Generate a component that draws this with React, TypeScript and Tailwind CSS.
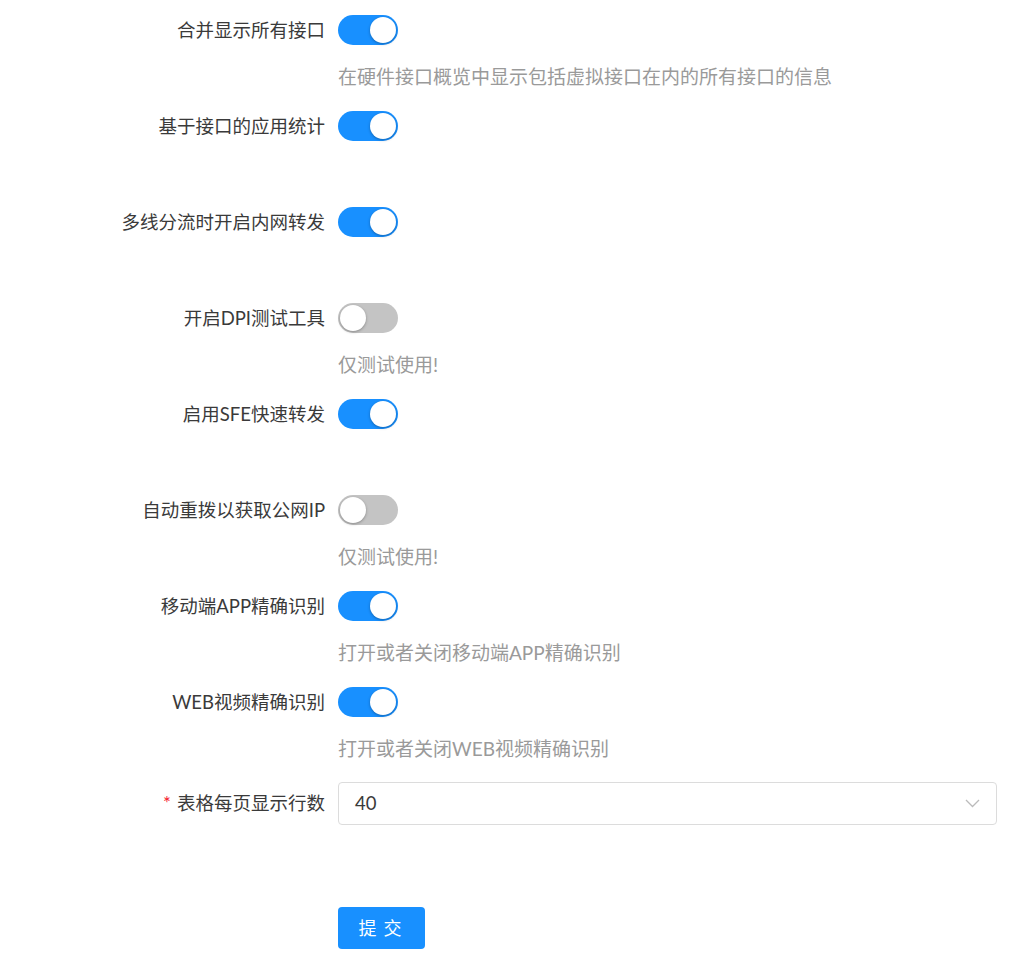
import { useState } from 'react';

type Item = { label: string; on: boolean; help?: string };

const ITEMS: Item[] = [
  { label: '合并显示所有接口', on: true, help: '在硬件接口概览中显示包括虚拟接口在内的所有接口的信息' },
  { label: '基于接口的应用统计', on: true },
  { label: '多线分流时开启内网转发', on: true },
  { label: '开启DPI测试工具', on: false, help: '仅测试使用!' },
  { label: '启用SFE快速转发', on: true },
  { label: '自动重拨以获取公网IP', on: false, help: '仅测试使用!' },
  { label: '移动端APP精确识别', on: true, help: '打开或者关闭移动端APP精确识别' },
  { label: 'WEB视频精确识别', on: true, help: '打开或者关闭WEB视频精确识别' },
];

function Switch({ on, onToggle }: { on: boolean; onToggle: () => void }) {
  return (
    <button
      type="button"
      onClick={onToggle}
      className={`relative h-[30px] w-[60px] rounded-full transition-colors ${
        on ? 'bg-[#1890ff]' : 'bg-[#c4c4c4]'
      }`}
    >
      <span
        className={`absolute top-[2px] h-[26px] w-[26px] rounded-full bg-white shadow-[0_1px_3px_rgba(0,0,0,0.3)] transition-all ${
          on ? 'left-[32px]' : 'left-[2px]'
        }`}
      />
    </button>
  );
}

export default function App() {
  const [values, setValues] = useState(ITEMS.map((i) => i.on));

  return (
    <div
      className="min-h-[980px] w-[1024px] bg-white pt-[14px] text-[18.5px] text-[#3a3a3a]"
      style={{ fontFamily: 'Lato, "Noto Sans CJK SC", sans-serif' }}
    >
      {ITEMS.map((item, idx) => (
        <div key={item.label} className="flex h-[96px]">
          <div className="w-[325px] shrink-0 text-right leading-[32px]">{item.label}</div>
          <div className="ml-[13px] flex flex-col">
            <div className="flex h-[32px] items-center">
              <Switch
                on={values[idx]}
                onToggle={() =>
                  setValues((v) => v.map((x, i) => (i === idx ? !x : x)))
                }
              />
            </div>
            {item.help && (
              <div className="mt-[15px] text-[19px] leading-[32px] text-[#9a9a9a]">{item.help}</div>
            )}
          </div>
        </div>
      ))}

      <div className="flex h-[125px]">
        <div className="w-[325px] shrink-0 text-right leading-[43px]">
          <span className="mr-[6px] text-[#f5222d]">*</span>表格每页显示行数
        </div>
        <div className="ml-[13px] flex h-[43px] w-[659px] items-center justify-between rounded-[4px] border border-[#dcdcdc] pl-[16px] pr-[16px]">
          <span>40</span>
          <svg width="15" height="9" viewBox="0 0 15 9" fill="none" className="text-[#bbb]">
            <path d="M1 1l6.5 6.5L14 1" stroke="currentColor" strokeWidth="1.3" />
          </svg>
        </div>
      </div>

      <div className="flex">
        <div className="ml-[338px]">
          <button
            type="button"
            className="h-[42px] w-[87px] rounded-[4px] bg-[#1890ff] pl-[4px] text-[18px] tracking-[7px] text-white"
          >
            提交
          </button>
        </div>
      </div>
    </div>
  );
}
